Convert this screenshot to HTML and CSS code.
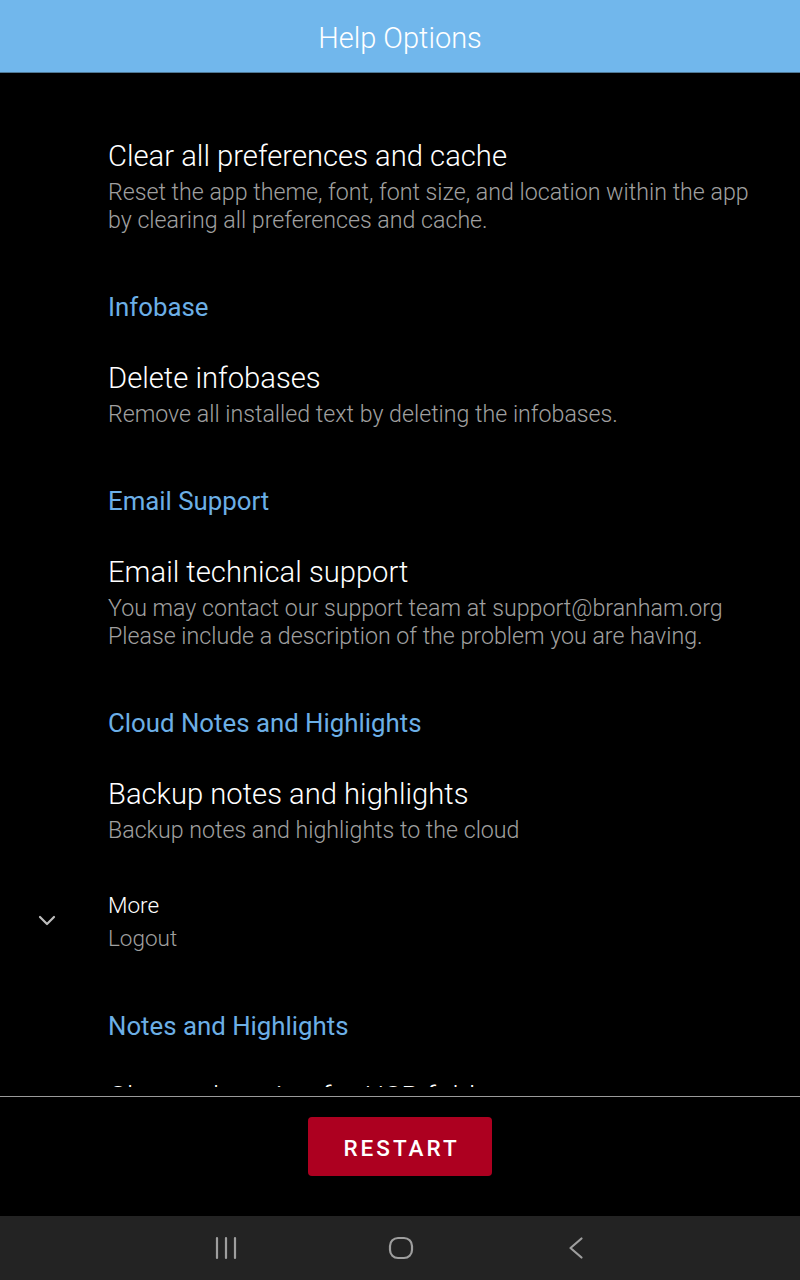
FILE: index.html
```html
<!DOCTYPE html>
<html lang="en">
<head>
    <meta charset="UTF-8">
    <meta name="viewport" content="width=device-width, initial-scale=1.0">
    <title>Help Options</title>
    <link rel="stylesheet" href="styles.css">
</head>
<body>
    <div class="screen">
        <header class="app-bar">Help Options</header>

        <div class="pref-list">
            <div class="pref-item">
                <div class="pref-title">Clear all preferences and cache</div>
                <div class="pref-summary">Reset the app theme, font, font size, and location within the app by clearing all preferences and cache.</div>
            </div>

            <div class="pref-category">Infobase</div>
            <div class="pref-item">
                <div class="pref-title">Delete infobases</div>
                <div class="pref-summary">Remove all installed text by deleting the infobases.</div>
            </div>

            <div class="pref-category">Email Support</div>
            <div class="pref-item">
                <div class="pref-title">Email technical support</div>
                <div class="pref-summary">You may contact our support team at support@branham.org<br>Please include a description of the problem you are having.</div>
            </div>

            <div class="pref-category">Cloud Notes and Highlights</div>
            <div class="pref-item">
                <div class="pref-title">Backup notes and highlights</div>
                <div class="pref-summary">Backup notes and highlights to the cloud</div>
            </div>

            <!-- grupo expandible -->
            <div class="pref-more">
                <svg class="more-icon" width="18" height="12" viewBox="0 0 18 12">
                    <path d="M2 3 L9 10 L16 3" fill="none" stroke="#bdbdbd" stroke-width="2.2" stroke-linecap="round" stroke-linejoin="round"/>
                </svg>
                <div class="more-title">More</div>
                <div class="more-summary">Logout</div>
            </div>

            <div class="pref-category">Notes and Highlights</div>
            <div class="pref-item">
                <div class="pref-title">Choose location for USB folder</div>
            </div>
        </div>

        <div class="bottom-bar">
            <button class="restart-btn">RESTART</button>
        </div>

        <nav class="nav-bar">
            <svg width="26" height="24" viewBox="0 0 26 24">
                <path d="M4 2 V22 M13 2 V22 M22 2 V22" stroke="#9e9e9e" stroke-width="2.2" stroke-linecap="round"/>
            </svg>
            <svg width="26" height="24" viewBox="0 0 26 24">
                <rect x="2" y="2" width="22" height="20" rx="8" fill="none" stroke="#9e9e9e" stroke-width="2.2"/>
            </svg>
            <svg width="26" height="24" viewBox="0 0 26 24">
                <path d="M18.5 2.5 L7.5 12 L18.5 21.5" fill="none" stroke="#9e9e9e" stroke-width="2.2" stroke-linecap="round" stroke-linejoin="round"/>
            </svg>
        </nav>
    </div>
</body>
</html>
```

FILE: styles.css
```css
/* General */
body {
    margin: 0;
    padding: 0;
    background-color: #000;
    font-family: Roboto, "Liberation Sans", sans-serif;
    color: #fff;
}

.screen {
    width: 800px;
    height: 1280px;
    display: flex;
    flex-direction: column;
    overflow: hidden;
}

/* Barra superior */
.app-bar {
    height: 72px;
    line-height: 76px;
    background-color: #71b7ec;
    border-bottom: 1px solid #4f7895;
    text-align: center;
    font-size: 29px;
    font-weight: 300;
    color: #fff;
}

/* Lista de preferencias */
.pref-list {
    height: 967px;
    padding-top: 47px;
    margin-bottom: 9px;
    overflow: hidden;
    flex-shrink: 0;
}

.pref-item {
    padding: 18px 40px 18px 108px;
}

.pref-title {
    font-size: 29.2px;
    font-weight: 300;
    line-height: 36px;
    color: #fff;
}

.pref-summary {
    margin-top: 4px;
    font-size: 23.2px;
    font-weight: 300;
    line-height: 28px;
    color: #a0a0a0;
}

.pref-category {
    padding: 39px 40px 19px 108px;
    font-size: 25.8px;
    line-height: 32px;
    color: #6cafe6;
}

.pref-more {
    position: relative;
    padding: 27px 40px 16px 108px;
}

.more-icon {
    position: absolute;
    left: 38px;
    top: 52px;
}

.more-title {
    font-size: 22.5px;
    font-weight: 300;
    line-height: 32px;
    color: #fff;
}

.more-summary {
    font-size: 22.5px;
    font-weight: 300;
    line-height: 34px;
    color: #a0a0a0;
}

/* Botón inferior */
.bottom-bar {
    border-top: 1px solid #9a9a9a;
    height: 120px;
    display: flex;
    justify-content: center;
    align-items: flex-start;
    padding-top: 20px;
    box-sizing: border-box;
    flex-shrink: 0;
}

.restart-btn {
    width: 184px;
    height: 59px;
    padding: 3px 0 0 3px;
    background-color: #ad0020;
    border: none;
    border-radius: 4px;
    color: #fff;
    font-family: Roboto, "Liberation Sans", sans-serif;
    font-size: 22.5px;
    font-weight: 500;
    letter-spacing: 3px;
    box-shadow: 0 2px 4px rgba(0, 0, 0, 0.5);
}

/* Barra de navegación */
.nav-bar {
    height: 64px;
    flex-shrink: 0;
    background-color: #232323;
    display: flex;
    justify-content: center;
    align-items: center;
    gap: 149px;
    padding-left: 2px;
}
```
